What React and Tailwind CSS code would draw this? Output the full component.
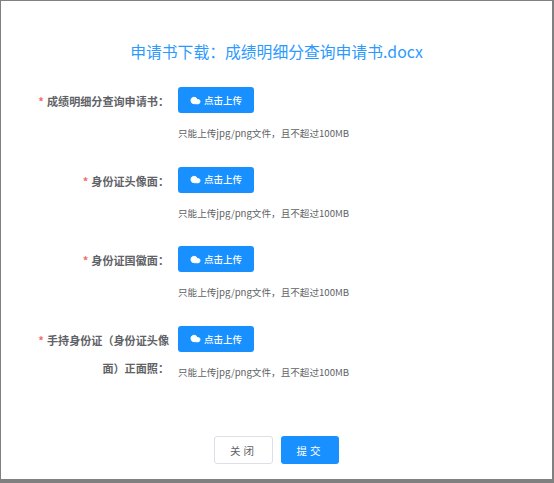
import { Cloud } from 'lucide-react';

const CJK = { fontFamily: '"Noto Sans CJK SC", "Noto Sans", sans-serif' };

const rows = [
  { label: '成绩明细分查询申请书：' },
  { label: '身份证头像面：' },
  { label: '身份证国徽面：' },
  { label: '手持身份证（身份证头像面）正面照：' },
];

function UploadRow({ label }) {
  return (
    <div className="flex h-[79.6px]">
      <div className="w-[177px] shrink-0 pl-[36px] pr-[9px] text-right text-[11.1px] font-bold leading-[28.5px] text-[#606266]">
        <span className="mr-[3px] text-[#f56c6c]">*</span>
        {label}
      </div>
      <div>
        <button className="flex h-[26px] w-[76px] items-center justify-center gap-[3px] rounded-[3px] bg-[#1890ff] text-[9.5px] font-medium text-white">
          <Cloud size={11} fill="white" strokeWidth={2} />
          点击上传
        </button>
        <p className="mt-[14px] text-[9.6px] leading-[13px] text-[#606266]">只能上传jpg/png文件，且不超过100MB</p>
      </div>
    </div>
  );
}

export default function App() {
  return (
    <div className="h-[483px] w-[554px] overflow-hidden bg-[#808080] pl-px pr-[2px] pt-px" style={CJK}>
      <div className="flex h-[478px] flex-col bg-white">
        <h1 className="pt-[41px] text-center text-[15.8px] font-normal leading-[20px] text-[#2b9aff]">
          申请书下载：成绩明细分查询申请书.docx
        </h1>
        <div className="mt-[25px]">
          {rows.map((row) => (
            <UploadRow key={row.label} label={row.label} />
          ))}
        </div>
        <div className="ml-[213px] mt-[31px] flex gap-[8px]">
          <button className="h-[28px] w-[59px] rounded-[3px] border border-[#dcdfe6] bg-white text-[10.5px] tracking-[3px] text-[#606266]">关闭</button>
          <button className="h-[28px] w-[58px] rounded-[3px] bg-[#1890ff] text-[10.5px] tracking-[3px] text-white">提交</button>
        </div>
      </div>
    </div>
  );
}
